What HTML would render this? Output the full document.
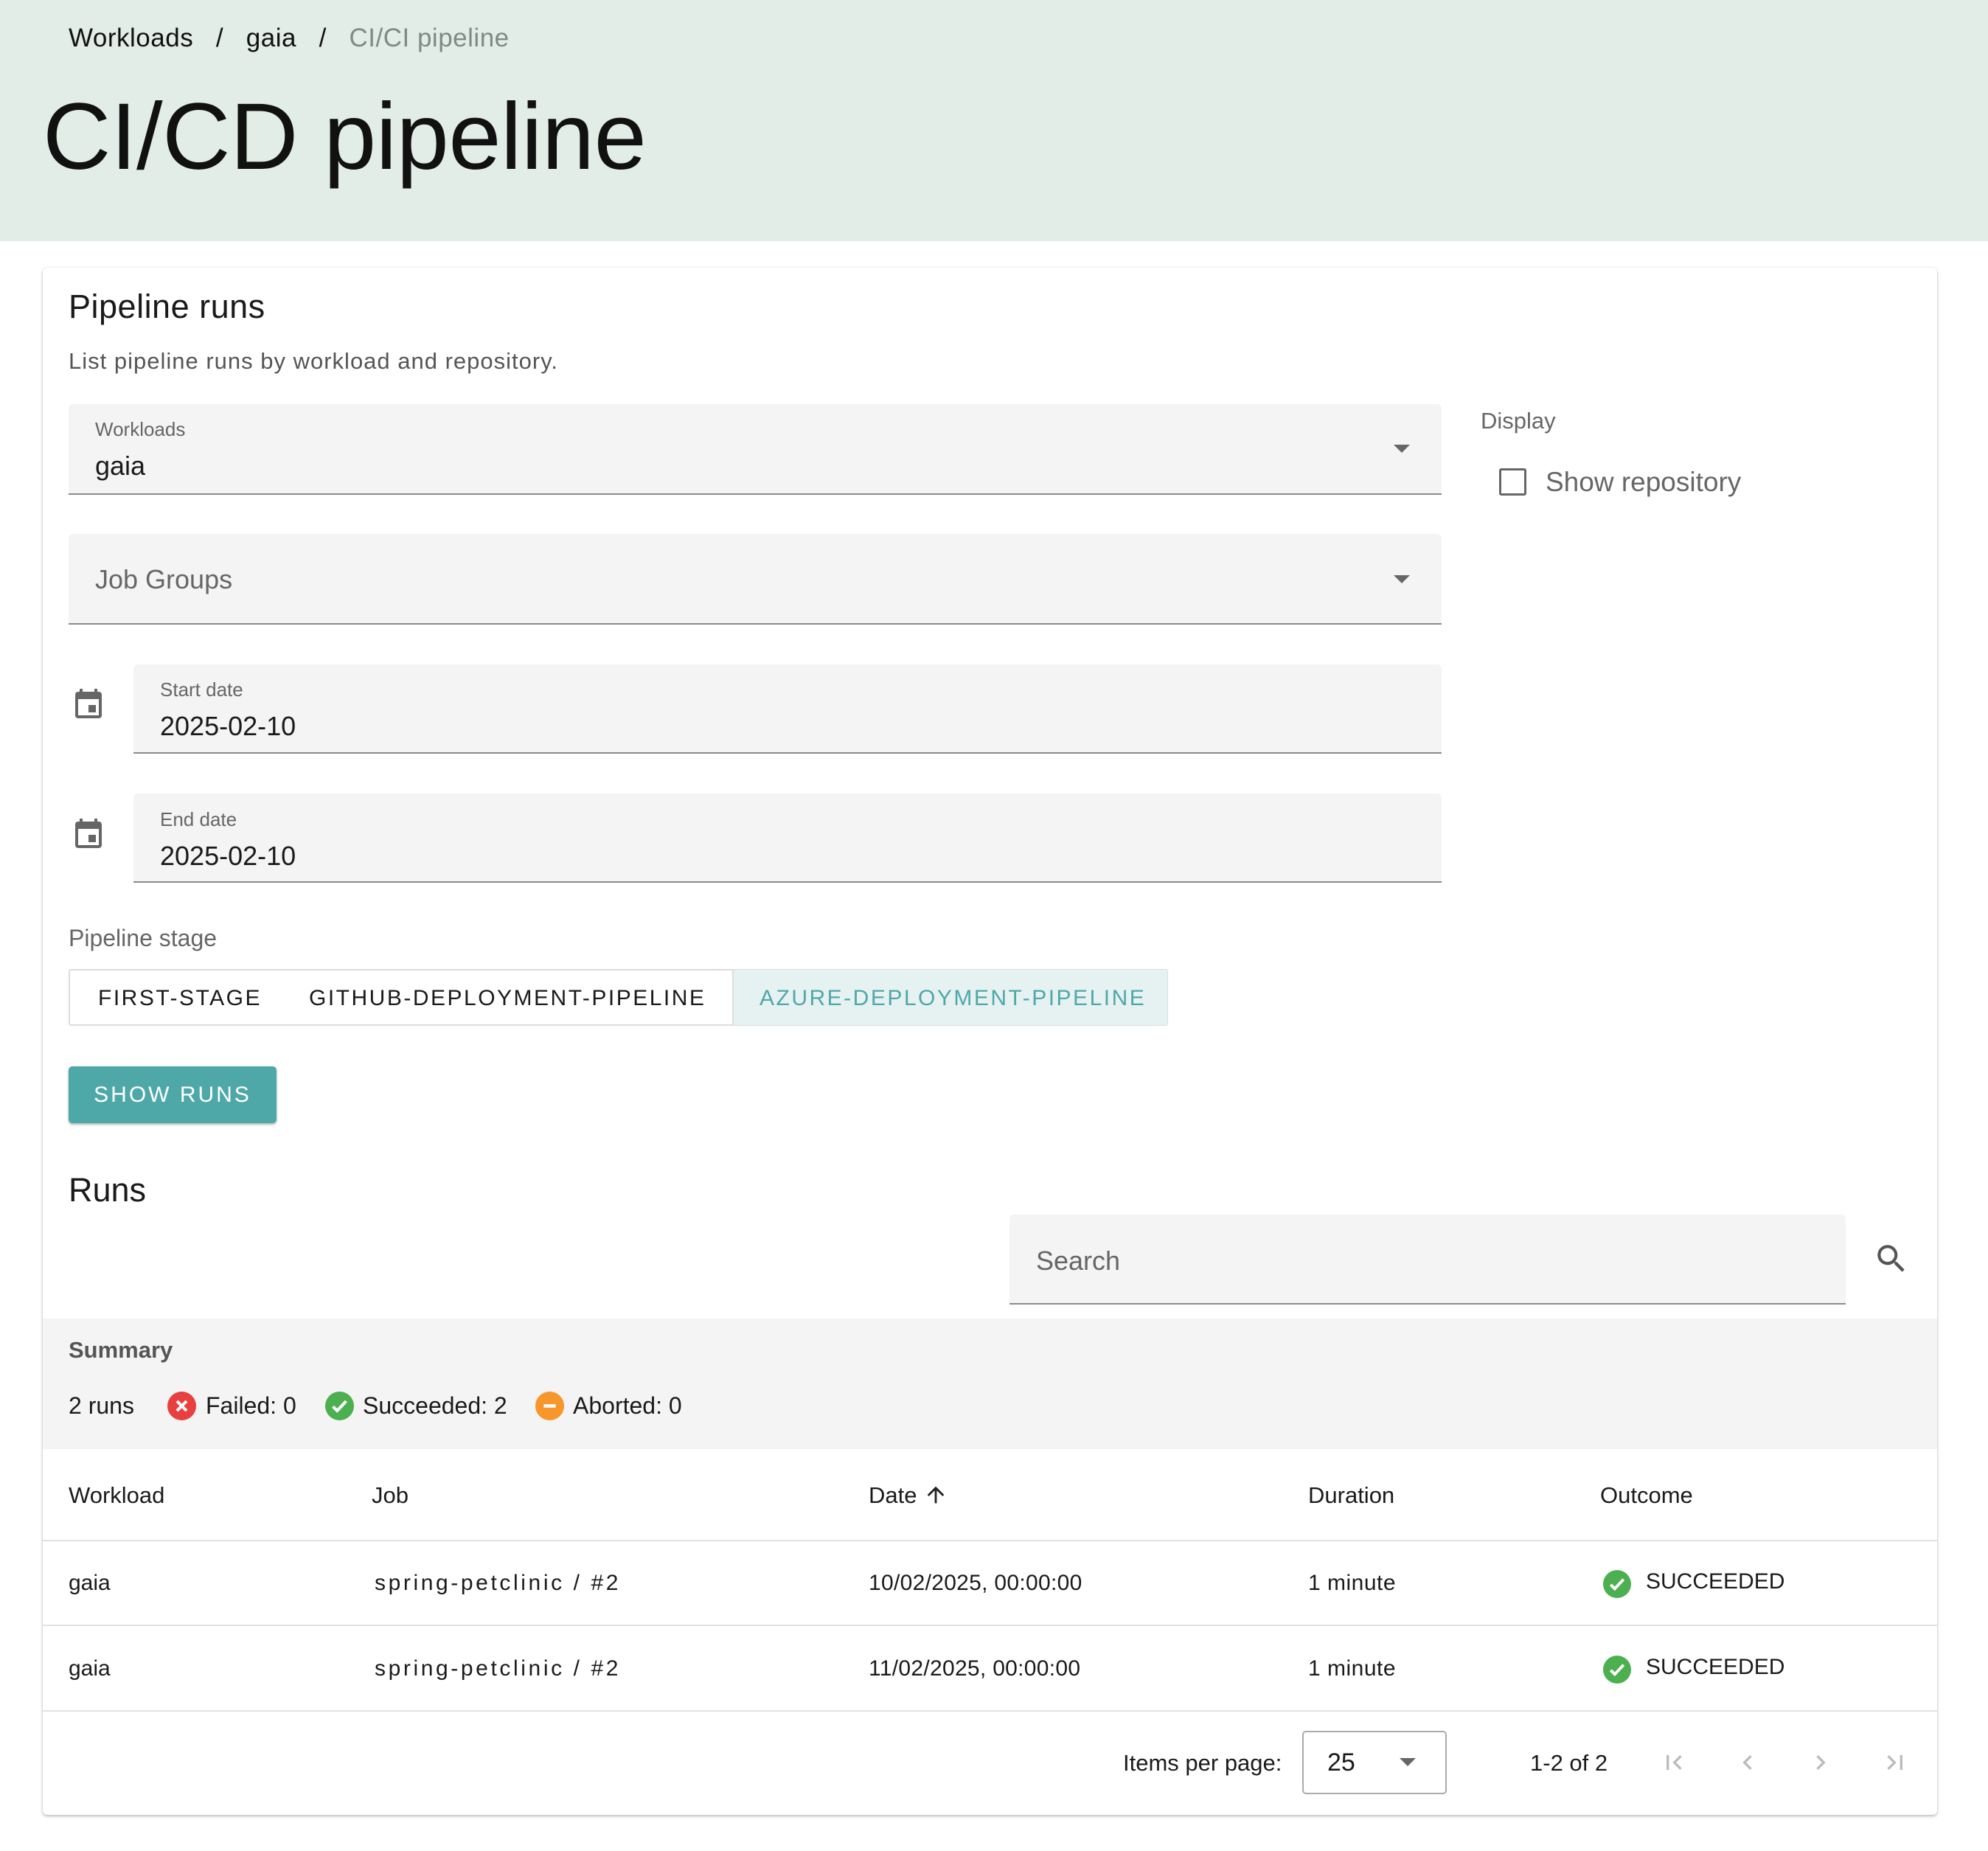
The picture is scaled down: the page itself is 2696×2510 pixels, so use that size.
<!DOCTYPE html>
<html><head><meta charset="utf-8"><style>
*{margin:0;padding:0;box-sizing:border-box}
body{width:2696px;height:2510px;background:#fff;font-family:"Liberation Sans",sans-serif;color:#1a1a1a;position:relative;overflow:hidden}
.a{position:absolute;white-space:nowrap}
.hdr{position:absolute;left:0;top:0;width:2696px;height:327px;background:#e1ede6}
.card{position:absolute;left:58px;top:363px;width:2569px;height:2098px;background:#fff;border-radius:6px;box-shadow:0 2px 4px rgba(0,0,0,.25),0 0 2px rgba(0,0,0,.1)}
.fld{position:absolute;background:#f4f4f4;border-bottom:2px solid #8a8a8a;border-radius:6px 6px 0 0}
.lbl{font-size:26px;color:#666}
.val{font-size:36px;color:#1a1a1a}
.tri{position:absolute;width:0;height:0;border-left:11px solid transparent;border-right:11px solid transparent;border-top:11px solid #666}
</style></head><body>
<div class="hdr"></div>
<div class="a" style="left:93px;top:32px;font-size:35px;color:#111;letter-spacing:0.5px">Workloads&nbsp;&nbsp;&nbsp;/&nbsp;&nbsp;&nbsp;gaia&nbsp;&nbsp;&nbsp;/&nbsp;&nbsp;&nbsp;<span style="color:#7f8a85">CI/CI pipeline</span></div>
<div class="a" style="left:58px;top:112px;font-size:128px;color:#111;letter-spacing:-0.5px">CI/CD pipeline</div>

<div class="card"></div>
<div class="a" style="left:93px;top:390px;font-size:45px;letter-spacing:0.5px">Pipeline runs</div>
<div class="a" style="left:93px;top:472px;font-size:31px;color:#555;letter-spacing:1px">List pipeline runs by workload and repository.</div>

<div class="fld" style="left:93px;top:548px;width:1862px;height:123px"></div>
<div class="a lbl" style="left:129px;top:567px">Workloads</div>
<div class="a val" style="left:129px;top:611px">gaia</div>
<div class="tri" style="left:1890px;top:603px"></div>

<div class="a" style="left:2008px;top:553px;font-size:31px;color:#666">Display</div>
<div class="a" style="left:2033px;top:635px;width:37px;height:37px;border:3px solid #666;border-radius:3px"></div>
<div class="a" style="left:2096px;top:633px;font-size:37px;color:#666">Show repository</div>

<div class="fld" style="left:93px;top:724px;width:1862px;height:123px"></div>
<div class="a" style="left:129px;top:765px;font-size:36px;color:#666">Job Groups</div>
<div class="tri" style="left:1890px;top:780px"></div>

<svg class="a" style="left:96px;top:932px" width="48" height="48" viewBox="0 0 24 24"><path fill="#666" d="M17 12h-5v5h5v-5zM16 1v2H8V1H6v2H5c-1.11 0-1.990.9-1.99 2L3 19c0 1.1.89 2 2 2h14c1.1 0 2-.9 2-2V5c0-1.1-.9-2-2-2h-1V1h-2zm3 18H5V8h14v11z"/></svg>
<div class="fld" style="left:181px;top:901px;width:1774px;height:121px"></div>
<div class="a lbl" style="left:217px;top:920px">Start date</div>
<div class="a val" style="left:217px;top:964px">2025-02-10</div>

<svg class="a" style="left:96px;top:1108px" width="48" height="48" viewBox="0 0 24 24"><path fill="#666" d="M17 12h-5v5h5v-5zM16 1v2H8V1H6v2H5c-1.11 0-1.99.9-1.99 2L3 19c0 1.1.89 2 2 2h14c1.1 0 2-.9 2-2V5c0-1.1-.9-2-2-2h-1V1h-2zm3 18H5V8h14v11z"/></svg>
<div class="fld" style="left:181px;top:1076px;width:1774px;height:121px"></div>
<div class="a lbl" style="left:217px;top:1096px">End date</div>
<div class="a val" style="left:217px;top:1140px">2025-02-10</div>

<div class="a" style="left:93px;top:1254px;font-size:32px;color:#666">Pipeline stage</div>
<div class="a" style="left:93px;top:1314px;width:1491px;height:77px;border:2px solid #ddd;border-radius:3px"></div>
<div class="a" style="left:993px;top:1315px;width:590px;height:75px;background:#e6f1f1;border-left:2px solid #ddd"></div>
<div class="a" style="left:133px;top:1337px;font-size:30px;letter-spacing:2.5px">FIRST-STAGE</div>
<div class="a" style="left:419px;top:1337px;font-size:30px;letter-spacing:2.5px">GITHUB-DEPLOYMENT-PIPELINE</div>
<div class="a" style="left:1030px;top:1337px;font-size:30px;letter-spacing:2.5px;color:#4fa8a8">AZURE-DEPLOYMENT-PIPELINE</div>

<div class="a" style="left:93px;top:1446px;width:282px;height:77px;background:#4fa8a8;border-radius:5px;box-shadow:0 2px 3px rgba(0,0,0,.3);color:#fff;font-size:30px;letter-spacing:3px;text-align:center;line-height:77px">SHOW RUNS</div>

<div class="a" style="left:93px;top:1588px;font-size:45px">Runs</div>
<div class="fld" style="left:1369px;top:1647px;width:1134px;height:122px"></div>
<div class="a" style="left:1405px;top:1689px;font-size:36px;color:#666">Search</div>
<svg class="a" style="left:2540px;top:1682px" width="50" height="50" viewBox="0 0 24 24"><path fill="#555" d="M15.5 14h-.79l-.28-.27A6.47 6.47 0 0 0 16 9.5 6.5 6.5 0 1 0 9.5 16c1.61 0 3.090-.59 4.23-1.57l.27.28v.79l5 4.99L20.49 19l-4.990-5zm-6 0C7.01 14 5 11.99 5 9.5S7.01 5 9.5 5 14 7.01 14 9.5 11.99 14 9.5 14z"/></svg>

<div class="a" style="left:58px;top:1788px;width:2569px;height:177px;background:#f4f4f4"></div>
<div class="a" style="left:93px;top:1813px;font-size:31px;font-weight:bold;color:#555">Summary</div>
<div class="a" style="left:93px;top:1888px;font-size:32px">2 runs</div>
<svg class="a" style="left:227px;top:1887px" width="39" height="39" viewBox="0 0 24 24"><circle cx="12" cy="12" r="12" fill="#e84040"/><path d="M8 8l8 8M16 8l-8 8" stroke="#fff" stroke-width="2.5"/></svg>
<div class="a" style="left:279px;top:1888px;font-size:32px">Failed: 0</div>
<svg class="a" style="left:441px;top:1887px" width="39" height="39" viewBox="0 0 24 24"><circle cx="12" cy="12" r="12" fill="#4caf50"/><path d="M6.5 12.5l3.5 3.5 7.5-8" stroke="#fff" stroke-width="2.5" fill="none"/></svg>
<div class="a" style="left:492px;top:1888px;font-size:32px">Succeeded: 2</div>
<svg class="a" style="left:726px;top:1887px" width="39" height="39" viewBox="0 0 24 24"><circle cx="12" cy="12" r="12" fill="#f7962b"/><path d="M7 12h10" stroke="#fff" stroke-width="2.8"/></svg>
<div class="a" style="left:777px;top:1888px;font-size:32px">Aborted: 0</div>

<div class="a" style="left:93px;top:2010px;font-size:31px">Workload</div>
<div class="a" style="left:504px;top:2010px;font-size:31px">Job</div>
<div class="a" style="left:1178px;top:2010px;font-size:31px">Date</div>
<svg class="a" style="left:1252px;top:2010px" width="34" height="34" viewBox="0 0 24 24"><path fill="#222" d="M4 12l1.41 1.41L11 7.83V20h2V7.830l5.58 5.59L20 12l-8-8-8 8z"/></svg>
<div class="a" style="left:1774px;top:2010px;font-size:31px">Duration</div>
<div class="a" style="left:2170px;top:2010px;font-size:31px">Outcome</div>
<div class="a" style="left:58px;top:2088px;width:2569px;height:2px;background:#e0e0e0"></div>

<div class="a" style="left:93px;top:2130px;font-size:30px">gaia</div>
<div class="a" style="left:508px;top:2130px;font-size:30px;letter-spacing:3.6px">spring-petclinic / #2</div>
<div class="a" style="left:1178px;top:2130px;font-size:30px;letter-spacing:0.3px">10/02/2025, 00:00:00</div>
<div class="a" style="left:1774px;top:2130px;font-size:30px;letter-spacing:0.5px">1 minute</div>
<svg class="a" style="left:2174px;top:2129px" width="38" height="38" viewBox="0 0 24 24"><circle cx="12" cy="12" r="12" fill="#4caf50"/><path d="M6.5 12.5l3.5 3.5 7.5-8" stroke="#fff" stroke-width="2.5" fill="none"/></svg>
<div class="a" style="left:2232px;top:2128px;font-size:30px">SUCCEEDED</div>
<div class="a" style="left:58px;top:2203px;width:2569px;height:2px;background:#e0e0e0"></div>

<div class="a" style="left:93px;top:2246px;font-size:30px">gaia</div>
<div class="a" style="left:508px;top:2246px;font-size:30px;letter-spacing:3.6px">spring-petclinic / #2</div>
<div class="a" style="left:1178px;top:2246px;font-size:30px;letter-spacing:0.3px">11/02/2025, 00:00:00</div>
<div class="a" style="left:1774px;top:2246px;font-size:30px;letter-spacing:0.5px">1 minute</div>
<svg class="a" style="left:2174px;top:2245px" width="38" height="38" viewBox="0 0 24 24"><circle cx="12" cy="12" r="12" fill="#4caf50"/><path d="M6.5 12.5l3.5 3.5 7.5-8" stroke="#fff" stroke-width="2.5" fill="none"/></svg>
<div class="a" style="left:2232px;top:2244px;font-size:30px">SUCCEEDED</div>
<div class="a" style="left:58px;top:2319px;width:2569px;height:2px;background:#e0e0e0"></div>

<div class="a" style="left:1523px;top:2373px;font-size:31px">Items per page:</div>
<div class="a" style="left:1766px;top:2347px;width:196px;height:86px;border:2px solid #aaa;border-radius:5px"></div>
<div class="a" style="left:1800px;top:2371px;font-size:34px">25</div>
<div class="tri" style="left:1898px;top:2384px;border-top-color:#666"></div>
<div class="a" style="left:2075px;top:2373px;font-size:31px">1-2 of 2</div>
<svg class="a" style="left:2250px;top:2370px" width="40" height="40" viewBox="0 0 24 24"><path fill="#bbb" d="M18.41 16.59L13.82 12l4.59-4.59L17 6l-6 6 6 6zM6 6h2v12H6z"/></svg>
<svg class="a" style="left:2350px;top:2370px" width="40" height="40" viewBox="0 0 24 24"><path fill="#bbb" d="M15.41 7.41L14 6l-6 6 6 6 1.41-1.41L10.83 12z"/></svg>
<svg class="a" style="left:2449px;top:2370px" width="40" height="40" viewBox="0 0 24 24"><path fill="#bbb" d="M10 6L8.59 7.41 13.17 12l-4.58 4.59L10 18l6-6z"/></svg>
<svg class="a" style="left:2550px;top:2370px" width="40" height="40" viewBox="0 0 24 24"><path fill="#bbb" d="M5.59 7.41L10.18 12l-4.59 4.59L7 18l6-6-6-6zM16 6h2v12h-2z"/></svg>
</body></html>
